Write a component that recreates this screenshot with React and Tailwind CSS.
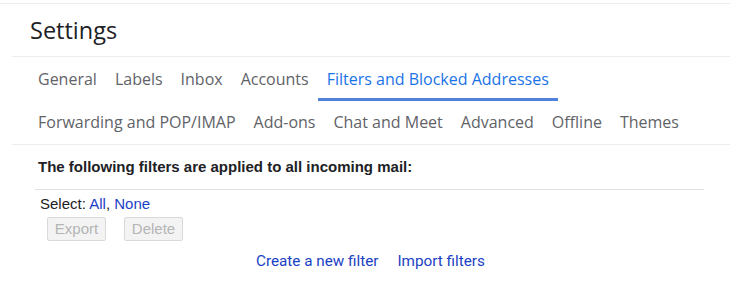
const rowOne = ["General", "Labels", "Inbox", "Accounts", "Filters and Blocked Addresses"];
const rowTwo = ["Forwarding and POP/IMAP", "Add-ons", "Chat and Meet", "Advanced", "Offline", "Themes"];

const Tab = ({ label, active }) => (
  <div
    className={
      "h-[44px] px-[9px] pt-[2px] flex items-center text-[16px] border-b-[3px] " +
      (active ? "text-[#1a73e8] border-[#4f82dc]" : "text-[#5f6368] border-transparent")
    }
  >
    {label}
  </div>
);

export default function App() {
  return (
    <div className="w-[742px] h-[292px] bg-white overflow-hidden font-['Open_Sans',sans-serif]">
      <div className="mt-[3px] w-[730px] border-t border-[#ececec]">
        <div className="h-[52px] pl-[30px] pt-[2px] flex items-center text-[23.5px] text-[#202124]">Settings</div>
      </div>

      <div className="ml-[12px] w-[718px] border-t border-[#ececec]">
        <div className="flex pl-[17px]">
          {rowOne.map((t) => (
            <Tab key={t} label={t} active={t === "Filters and Blocked Addresses"} />
          ))}
        </div>
        <div className="flex pl-[17px] -mt-px">
          {rowTwo.map((t) => (
            <Tab key={t} label={t} />
          ))}
        </div>
      </div>

      <div className="ml-[12px] w-[718px] border-t border-[#ececec]" />

      <div className="ml-[35px] w-[669px] font-['Liberation_Sans',Arial,sans-serif] text-[15px]">
        <div className="h-[44px] pl-[3px] flex items-center font-bold text-[#202124]">
          The following filters are applied to all incoming mail:
        </div>
        <div className="border-t border-[#e0e0e0]" />
        <div className="pl-[5px] pt-[4px] leading-[20px] text-[#222]">
          Select: <span className="text-[#1a3fc4]">All</span>,{" "}
          <span className="text-[#1a3fc4]">None</span>
        </div>
        <div className="flex gap-[18px] pl-[12px] pt-[3px]">
          <button className="w-[59px] h-[24px] rounded-[2px] border border-[#dadada] bg-[#f3f3f3] text-[#b5b5b5] text-[15px]">
            Export
          </button>
          <button className="w-[59px] h-[24px] rounded-[2px] border border-[#dadada] bg-[#f3f3f3] text-[#b5b5b5] text-[15px]">
            Delete
          </button>
        </div>
        <div className="flex gap-[19px] pl-[221px] pt-[9px] font-['Roboto',sans-serif] text-[#1a3fc4] text-[15.25px]">
          <span>Create a new filter</span>
          <span>Import filters</span>
        </div>
      </div>
    </div>
  );
}
